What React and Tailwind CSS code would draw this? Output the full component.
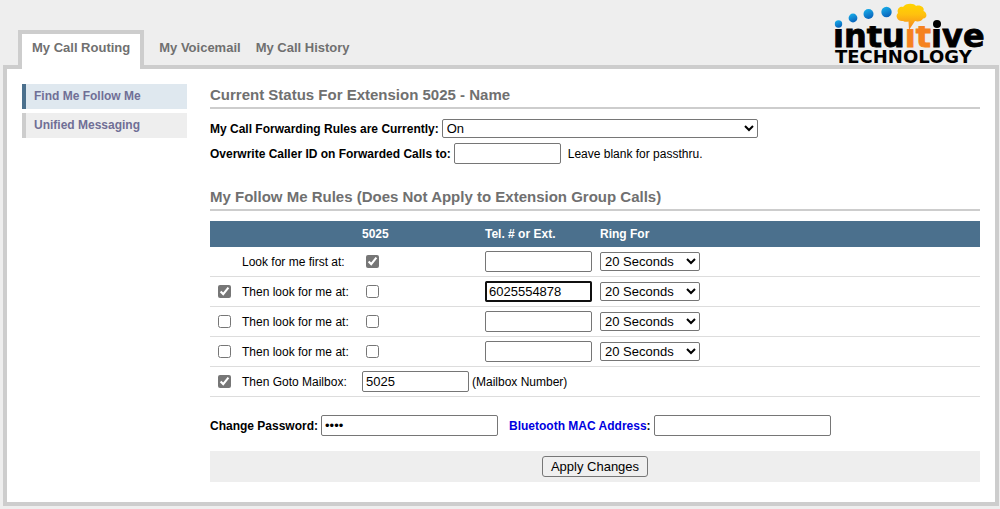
import { useEffect, useRef } from 'react'

const tabs = ['My Voicemail', 'My Call History']

const rules = [
  { label: 'Look for me first at:', ext: true, tel: '' },
  { label: 'Then look for me at:', enabled: true, ext: false, tel: '6025554878' },
  { label: 'Then look for me at:', enabled: false, ext: false, tel: '' },
  { label: 'Then look for me at:', enabled: false, ext: false, tel: '' },
]

const inputClass =
  'h-[21px] rounded-xs border border-[#767676] bg-white px-[3px] text-[13px] font-normal focus:outline-2 focus:-outline-offset-2 focus:outline-[#101010]'
const selectClass = 'h-[19px] rounded-xs border border-[#767676] bg-white text-[13px]'
const checkClass = 'block size-[13px] accent-[#767676]'

function Logo() {
  return (
    <svg
      width="152"
      height="65"
      viewBox="0 0 152 65"
      role="img"
      aria-label="intuitive technology"
      className="shrink-0 overflow-visible"
    >
      <defs>
        <linearGradient id="cloud" x1="0" y1="0" x2="0" y2="1">
          <stop offset="0" stopColor="#ffd400" />
          <stop offset="0.4" stopColor="#ffc20e" />
          <stop offset="1" stopColor="#f58220" />
        </linearGradient>
        <linearGradient id="dot" x1="0" y1="0" x2="0.4" y2="1">
          <stop offset="0" stopColor="#19b5ee" />
          <stop offset="1" stopColor="#0a66bd" />
        </linearGradient>
      </defs>
      <text
        x="-1"
        y="47"
        fontSize="32"
        fontWeight="700"
        fontFamily="DejaVu Sans, sans-serif"
        stroke="#000000"
        strokeWidth="0.8"
      >
        intu
        <tspan fill="#f58220" stroke="#f58220">
          it
        </tspan>
        ive
      </text>
      {/* hides the square dots, the round ones are drawn on top */}
      <g fill="#eeeeee">
        <rect x="0" y="0" width="152" height="26" />
        <rect x="0" y="20" width="10" height="9" />
        <rect x="71" y="20" width="10" height="9" />
        <rect x="98" y="20" width="10" height="9" />
      </g>
      <text x="1" y="63" fontSize="18" fontWeight="700" fontFamily="DejaVu Sans, sans-serif">
        TECHNOLOGY
      </text>
      <circle cx="4.5" cy="24" r="3.7" fill="url(#dot)" />
      <circle cx="19" cy="18" r="4.4" fill="url(#dot)" />
      <circle cx="34.5" cy="14" r="5" fill="url(#dot)" />
      <circle cx="52.5" cy="12" r="5.2" fill="url(#dot)" />
      <circle cx="103" cy="24" r="4" />
      <path
        d="M69 21 C64 22 60.5 16 64 13 C62.5 9 66 6 69 7 C71 3 80 2.500 82 6 C86 4.500 91 7.500 89.5 11 C94 13 93 19 89 18.500 C88 21 84 22 81 21 L75 30 L74.500 21.500 C72.500 22 71 22 69 21 Z"
        fill="url(#cloud)"
      />
    </svg>
  )
}

function Heading({ children }) {
  return (
    <h2 className="border-b-2 border-[#cdcdcd] pt-px pb-[2px] text-[15px] leading-5 font-bold text-[#707070]">
      {children}
    </h2>
  )
}

export default function App() {
  const activeTel = useRef(null)

  useEffect(() => {
    const el = activeTel.current
    el.focus()
    el.setSelectionRange(el.value.length, el.value.length)
  }, [])

  return (
    <div className="min-h-screen bg-[#eeeeee] pr-px pb-[3px] pl-[3px] font-['Liberation_Sans',Arial,sans-serif] text-xs text-black">
      <header className="flex items-end justify-between pr-[13px] pl-[15px]">
        <nav className="flex text-[13px] leading-5 font-bold text-[#707070]">
          <a href="#routing" className="relative -mb-1 border-4 border-b-0 border-[#cdcdcd] bg-white px-2.5 pt-1 pb-[11px]">
            My Call Routing
          </a>
          <div className="flex gap-[15px] pt-2 pl-[15px]">
            {tabs.map((tab) => (
              <a key={tab} href="#tab">
                {tab}
              </a>
            ))}
          </div>
        </nav>
        <Logo />
      </header>

      <div className="flex gap-[23px] border-4 border-[#cdcdcd] bg-white pt-[15px] pr-[15px] pb-5 pl-[15px]">
        <aside className="flex w-[165px] shrink-0 flex-col gap-1 leading-[25px] font-bold text-[#706f96]">
          <a href="#find-me" className="border-l-4 border-[#4b708d] bg-[#dfe8ef] pl-2">
            Find Me Follow Me
          </a>
          <a href="#messaging" className="border-l-4 border-[#cdcdcd] bg-[#eeeeee] pl-2">
            Unified Messaging
          </a>
        </aside>

        <main className="min-w-0 flex-1">
          <Heading>Current Status For Extension 5025 - Name</Heading>
          <div className="mt-2.5 flex items-center gap-[3px]">
            <label htmlFor="forwarding" className="font-bold">
              My Call Forwarding Rules are Currently:
            </label>
            <select id="forwarding" className={`${selectClass} w-[316px]`}>
              <option>On</option>
              <option>Off</option>
            </select>
          </div>
          <div className="mt-[5px] flex items-center gap-[3px]">
            <label htmlFor="caller-id" className="font-bold">
              Overwrite Caller ID on Forwarded Calls to:
            </label>
            <input id="caller-id" className={`${inputClass} w-[107px]`} />
            <span className="pl-1">Leave blank for passthru.</span>
          </div>

          <div className="mt-[22px]">
            <Heading>My Follow Me Rules (Does Not Apply to Extension Group Calls)</Heading>
          </div>
          <table className="mt-2.5 w-full table-fixed border-separate border-spacing-0 text-left">
            <colgroup>
              <col className="w-8" />
              <col className="w-[120px]" />
              <col className="w-[123px]" />
              <col className="w-[115px]" />
              <col />
            </colgroup>
            <thead>
              <tr className="h-[26px] bg-[#4b708d] text-white">
                <th />
                <th />
                <th>5025</th>
                <th>Tel. # or Ext.</th>
                <th>Ring For</th>
              </tr>
            </thead>
            <tbody className="[&_td]:border-b [&_td]:border-[#dddddd]">
              {rules.map((rule, i) => (
                <tr key={i} className="h-[30px]">
                  <td className="pl-2">
                    {rule.enabled !== undefined && (
                      <input type="checkbox" id={`rule-${i}`} defaultChecked={rule.enabled} className={checkClass} />
                    )}
                  </td>
                  <td>
                    <label htmlFor={rule.enabled !== undefined ? `rule-${i}` : `ext-${i}`}>{rule.label}</label>
                  </td>
                  <td className="pl-1">
                    <input
                      type="checkbox"
                      id={`ext-${i}`}
                      aria-label="5025"
                      defaultChecked={rule.ext}
                      className={checkClass}
                    />
                  </td>
                  <td>
                    <input
                      ref={rule.tel ? activeTel : null}
                      aria-label="Tel. # or Ext."
                      defaultValue={rule.tel}
                      className={`${inputClass} block w-[107px]`}
                    />
                  </td>
                  <td>
                    <select aria-label="Ring For" className={`${selectClass} block w-[100px]`}>
                      <option>20 Seconds</option>
                      <option>30 Seconds</option>
                    </select>
                  </td>
                </tr>
              ))}
              <tr className="h-[30px]">
                <td className="pl-2">
                  <input type="checkbox" id="mailbox-on" defaultChecked className={checkClass} />
                </td>
                <td>
                  <label htmlFor="mailbox-on">Then Goto Mailbox:</label>
                </td>
                <td colSpan={3}>
                  <div className="flex items-center gap-[3px]">
                    <input id="mailbox" defaultValue="5025" className={`${inputClass} w-[107px]`} />
                    <label htmlFor="mailbox">(Mailbox Number)</label>
                  </div>
                </td>
              </tr>
            </tbody>
          </table>

          <div className="mt-[18px] flex items-center gap-[3px] font-bold">
            <label htmlFor="password">Change Password:</label>
            <input id="password" type="password" defaultValue="5025" className={`${inputClass} w-[177px]`} />
            <label htmlFor="mac" className="pl-2">
              <a href="#mac" className="text-[#0000e0]">
                Bluetooth MAC Address
              </a>
              :
            </label>
            <input id="mac" className={`${inputClass} w-[177px]`} />
          </div>

          <div className="mt-[15px] flex justify-center bg-[#eeeeee] py-[5px]">
            <button type="button" className="h-[21px] rounded-[3px] border border-[#767676] bg-[#efefef] px-2 text-[13px]">
              Apply Changes
            </button>
          </div>
        </main>
      </div>
    </div>
  )
}
